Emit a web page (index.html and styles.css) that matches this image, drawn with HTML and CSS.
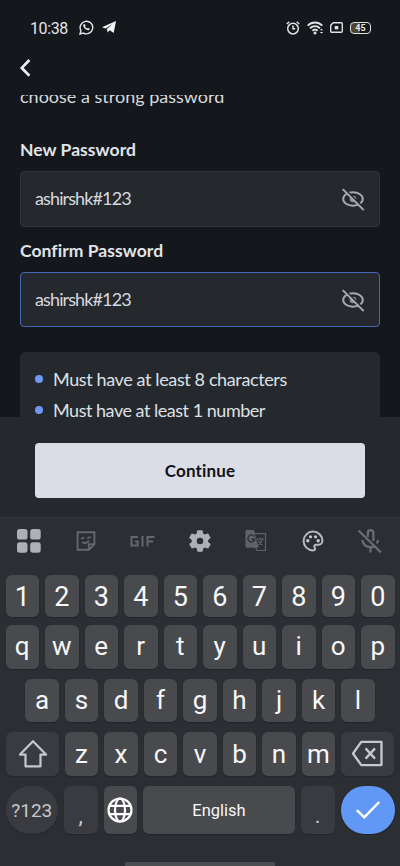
FILE: index.html
```html
<!DOCTYPE html>
<html lang="en">
<head>
<meta charset="utf-8">
<title>New password</title>
<link rel="stylesheet" href="styles.css">
</head>
<body>
<div class="screen">
  <header class="status">
    <span class="time">10:38</span>
    <svg class="whatsapp" width="15" height="15" viewBox="0 0 15 15" fill="none" stroke="#e4e6e9" stroke-width="1.4"><path d="M1 14l.9-3.4A6.3 6.3 0 1 1 4.400 13.100z"/><path d="M4.700 4.200l1-.3.900 1.700-.6.800c.5 1 1.200 1.700 2.200 2.100l.8-.7 1.700.9c-.2 1.300-1.200 1.700-2.300 1.400-2-.6-3.800-2.300-4.200-4.200-.1-.7 0-1.300.5-1.700z" fill="#e4e6e9" stroke="none"/></svg>
    <svg class="telegram" width="14" height="13" viewBox="0 0 14 13" fill="#f2f3f4"><path d="M0 6.300L14 0l-2.300 12.100-4-2.900-2.100 2.200-.7-3.500L10.500 3 3.600 7.400z"/></svg>
    <span class="spacer"></span>
    <svg class="alarm" width="14" height="14" viewBox="0 0 14 14" fill="none" stroke="#dfe1e4" stroke-width="1.500"><circle cx="7" cy="7.600" r="5.300"/><path d="M7 4.600v3.200h2.200M.8 3L3.300.8M13.200 3L10.700.8"/></svg>
    <svg class="wifi" width="17" height="14" viewBox="0 0 17 14" fill="none" stroke="#dfe1e4" stroke-width="1.900"><path d="M.7 4.600c4.200-4.200 10.400-4.200 14.600 0M3 7.300c3-2.900 7-2.900 10 0M5.400 9.800c1.600-1.500 3.600-1.500 5.200 0"/><circle cx="8" cy="12" r="1.500" fill="#dfe1e4" stroke="none"/><path d="M12.700 9.300l1.800-1.600 1.800 1.600zM12.700 10.900l1.800 1.600 1.800-1.600z" fill="#dfe1e4" stroke="none"/></svg>
    <svg class="sim" width="13" height="11" viewBox="0 0 13 11" fill="none" stroke="#dfe1e4" stroke-width="1.400"><path d="M3.300.7h8a1 1 0 0 1 1 1v7.600a1 1 0 0 1-1 1H1.700a1 1 0 0 1-1-1V3.300z"/><path d="M4.700 4h3.600v3.400H4.700z" fill="#dfe1e4" stroke="none"/></svg>
    <span class="battery">45</span>
  </header>
  <nav class="nav">
    <svg width="12" height="18" viewBox="0 0 12 18" fill="none" stroke="#eceef1" stroke-width="2.700"><path d="M10.400 1L2.800 8.900l7.600 7.900"/></svg>
  </nav>
  <main class="content">
    <p class="hint"><span>choose a strong password</span></p>
    <label class="label new">New Password</label>
    <div class="field"><span>ashirshk#123</span>
      <svg width="24" height="24" viewBox="0 0 24 24" fill="none" stroke="#a6a9b2" stroke-width="2"><ellipse cx="12" cy="12" rx="9.800" ry="6.700"/><circle cx="12" cy="12" r="3.300" fill="#8d9098" stroke="none"/><path d="M2.700 1.200l21 21" stroke="#25292e"/><path d="M1.700 2.100l21 21"/></svg>
    </div>
    <label class="label confirm">Confirm Password</label>
    <div class="field focused"><span>ashirshk#123</span>
      <svg width="24" height="24" viewBox="0 0 24 24" fill="none" stroke="#a6a9b2" stroke-width="2"><ellipse cx="12" cy="12" rx="9.800" ry="6.700"/><circle cx="12" cy="12" r="3.300" fill="#8d9098" stroke="none"/><path d="M2.700 1.200l21 21" stroke="#25292e"/><path d="M1.700 2.100l21 21"/></svg>
    </div>
    <ul class="rules">
      <li>Must have at least 8 characters</li>
      <li class="second">Must have at least 1 number</li>
    </ul>
  </main>
  <footer class="action"><button>Continue</button></footer>
  <section class="keyboard">
    <div class="tools">
      <svg width="26" height="26" viewBox="0 0 26 26" fill="#aeb0b6"><rect x="1" y="1" width="10.500" height="10.500" rx="2.600"/><rect x="14.200" y="1" width="10.500" height="10.500" rx="2.600"/><rect x="1" y="14.200" width="10.500" height="10.500" rx="2.600"/><rect x="14.200" y="14.200" width="10.500" height="10.500" rx="2.600"/></svg>
      <svg width="26" height="26" viewBox="0 0 26 26" fill="none" stroke="#65676b" stroke-width="1.900"><path d="M4.600 4.300h16.800v11.900l-5.400 5.500H4.600z"/><path d="M15.800 21.500v-5.400h5.500M8 10.600l3.200-1M14.200 10.200l3.700-1.100M9 14.200c2.700 1.300 5.300.7 7.200-1.300"/></svg>
      <svg width="28" height="26" viewBox="2 0 28 26" fill="none" stroke="#65676b" stroke-width="2"><path d="M10 9H3.500v8.500H9.700v-4H7M14.500 8v10.500M19.500 18.500V9h7M19.500 13.400h5.500"/></svg>
      <svg width="24" height="24" viewBox="1 1 22 22" fill="#aeb0b6"><path d="M19.400 13c0-.3.100-.6.100-1s0-.7-.1-1l2.100-1.600c.2-.2.200-.4.100-.6l-2-3.500c-.1-.2-.4-.3-.6-.2l-2.500 1c-.5-.4-1.100-.7-1.700-1l-.4-2.600c0-.2-.2-.4-.5-.4h-4c-.2 0-.4.200-.5.400L9 5.100c-.6.300-1.200.6-1.700 1l-2.500-1c-.2-.1-.5 0-.6.200l-2 3.500c-.1.200-.1.400.1.600L4.500 11c0 .3-.1.700-.1 1s0 .7.100 1l-2.100 1.600c-.2.200-.2.400-.1.600l2 3.500c.1.200.4.300.6.200l2.500-1c.5.400 1.100.7 1.700 1l.4 2.600c0 .2.200.4.500.4h4c.2 0 .4-.2.500-.4l.4-2.600c.6-.3 1.200-.6 1.700-1l2.500 1c.2.100.5 0 .6-.2l2-3.500c.1-.2.100-.4-.1-.6zM12 15a3 3 0 1 1 0-6 3 3 0 0 1 0 6z"/></svg>
      <svg width="26" height="26" viewBox="0 0 26 26" fill="none" stroke="#606267"><path d="M3.500 2.500h7l1.200 3.200h10.800v16.800h-8.500l-1.500-3.500h-9z" stroke-width="1.200"/><path d="M2.500 3.500a1.500 1.500 0 0 1 1.500-1.500h6.500l5.200 17.500H4A1.500 1.500 0 0 1 2.500 18z" fill="#606267" stroke="none"/><path d="M11.200 8.300a3.500 3.500 0 1 0 .6 3H8.500" stroke="#2c2f33" stroke-width="1.400"/><path d="M13 11h8M17 9.500V11M19.500 11c-.7 2.500-2.500 4.500-4.500 6M15 12.500c1 2 2.500 3.500 4.500 4.500" stroke-width="1.200"/></svg>
      <svg width="26" height="26" viewBox="0 0 26 26" fill="none" stroke="#b9bbc0" stroke-width="2"><path d="M13 3.600a9.400 9.400 0 1 0 0 18.800c2.100 0 2.700-1.400 1.700-2.800-.9-1.500-.1-2.900 1.600-2.900h2.300c2.100 0 3.800-1.700 3.800-3.900 0-5.100-4.200-9.200-9.400-9.200z"/><g fill="#c8cace" stroke="none"><circle cx="7.800" cy="12.800" r="1.700"/><circle cx="10.500" cy="8.800" r="1.600"/><circle cx="15.500" cy="8.800" r="1.600"/><circle cx="18.200" cy="12.800" r="1.700"/></g></svg>
      <svg width="26" height="26" viewBox="0 0 26 26" fill="none" stroke="#6b6d72" stroke-width="2.200"><path d="M10.800 9V5a2.800 2.800 0 0 1 5.600 0v8M5.500 12c0 4 3.400 7.200 8 7.200 1.600 0 3-.3 4.100-1M19.800 15.500c.7-1 1.100-2.200 1.100-3.500M13.500 19v5.500"/><path d="M1.500 2.500l22.500 22"/></svg>
    </div>
    <div class="row numbers"><kbd>1</kbd><kbd>2</kbd><kbd>3</kbd><kbd>4</kbd><kbd>5</kbd><kbd>6</kbd><kbd>7</kbd><kbd>8</kbd><kbd>9</kbd><kbd>0</kbd></div>
    <div class="row"><kbd>q</kbd><kbd>w</kbd><kbd>e</kbd><kbd>r</kbd><kbd>t</kbd><kbd>y</kbd><kbd>u</kbd><kbd>i</kbd><kbd>o</kbd><kbd>p</kbd></div>
    <div class="row"><kbd>a</kbd><kbd>s</kbd><kbd>d</kbd><kbd>f</kbd><kbd>g</kbd><kbd>h</kbd><kbd>j</kbd><kbd>k</kbd><kbd>l</kbd></div>
    <div class="row">
      <kbd class="dark wide"><svg width="30" height="30" viewBox="0 0 30 30" fill="none" stroke="#c5c8cd" stroke-width="2.200" stroke-linejoin="round"><path d="M15 2.200L28 15.600h-5.500v11.700h-15V15.600H2z"/></svg></kbd><kbd>z</kbd><kbd>x</kbd><kbd>c</kbd><kbd>v</kbd><kbd>b</kbd><kbd>n</kbd><kbd>m</kbd>
      <kbd class="dark wide"><svg width="33" height="27" viewBox="0 0 34 28" fill="none" stroke="#c5c8cd" stroke-width="2.400" stroke-linejoin="round"><path d="M10.500 2H31.500v24H10.500L2 14z"/><path d="M15 8.700l9.800 10.600M24.800 8.700l-9.800 10.600"/></svg></kbd>
    </div>
    <div class="row bottom">
      <kbd class="dark wide symbols">?123</kbd>
      <kbd class="dark punct">,</kbd>
      <kbd><svg width="28" height="28" viewBox="0 0 28 28" fill="none" stroke="#fff" stroke-width="2.200"><circle cx="14" cy="14" r="11.500"/><ellipse cx="14" cy="14" rx="5" ry="11.500"/><path d="M3.500 9.800h21M3.500 18.200h21"/></svg></kbd>
      <kbd class="space">English</kbd>
      <kbd class="dark punct">.</kbd>
      <kbd class="wide enter"><svg width="28" height="22" viewBox="0 0 28 22" fill="none" stroke="#fff" stroke-width="2.500"><path d="M2.800 11.200l7.500 7.100L25.200 3"/></svg></kbd>
    </div>
    <div class="home"></div>
  </section>
</div>
</body>
</html>
```

FILE: styles.css
```css
* { box-sizing: border-box; }
body { margin: 0; background: #14171b; font-family: Lato, "Liberation Sans", sans-serif; color: #e1e4e9; }
.screen { width: 400px; height: 866px; display: flex; flex-direction: column; overflow: hidden; background: #14171b; }
svg { display: block; flex: none; }
.status { height: 55px; flex: none; display: flex; align-items: center; padding: 0 29px 0 30px; }
.time { width: 49px; font: 16px/20px Roboto, sans-serif; letter-spacing: -.4px; padding-top: 2px; color: #e4e6e9; }
.telegram { margin-left: 8px; }
.spacer { flex: 1; }
.wifi { margin-left: 7px; }
.sim { margin-left: 6px; }
.battery { margin-left: 7px; width: 21px; height: 12px; border: 1.5px solid #dfe1e4; border-radius: 4px; background: linear-gradient(90deg, #51452f 45%, #14171b 45%); font: bold 9px/11px Roboto, sans-serif; text-align: center; color: #e4e6e9; }
.nav { height: 40px; flex: none; padding: 4px 0 0 19px; }
.content { height: 322px; flex: none; overflow: hidden; padding: 0 20px; display: flex; flex-direction: column; }
.hint { margin: 0; height: 45px; overflow: hidden; flex: none; }
.hint span { display: block; margin-top: -10px; font-size: 18px; line-height: 22px; color: #d7dade; white-space: nowrap; }
.label { display: block; flex: none; font-size: 17.500px; font-weight: 700; line-height: 20px; letter-spacing: .05px; }
.new { height: 31px; }
.confirm { height: 31px; margin-top: 14px; }
.field { flex: none; height: 56px; border: 1px solid #303439; border-radius: 4px; background: #25292e; display: flex; align-items: center; justify-content: space-between; padding: 0 14px; font-size: 18px; letter-spacing: -.88px; color: #d6d9df; }
.field span { padding-bottom: 2px; }
.field.focused { height: 55px; border: 1.5px solid #4668b4; }
.rules { flex: none; list-style: none; margin: 25px 0 0; padding: 17px 15px; height: 110px; border-radius: 6px; background: #25292e; font-size: 18px; letter-spacing: -.38px; line-height: 20px; }
.rules li { display: flex; align-items: center; height: 20px; color: #dde0e5; }
.rules li::before { content: ""; width: 8px; height: 8px; border-radius: 50%; background: #7197f5; margin-right: 10px; }
.rules .second { margin-top: 11px; letter-spacing: -.48px; }
.action { flex: none; height: 100px; padding: 26px 35px 0; background: #25292e; }
.action button { display: block; width: 330px; height: 55px; border: 0; border-radius: 4px; background: #dadde6; color: #111318; font: 700 17px/54px Lato, sans-serif; letter-spacing: .15px; padding: 0; }
.keyboard { flex: none; height: 349px; background: #2b2e33; border-top: 1px solid #34373c; padding: 0 5px; display: flex; flex-direction: column; font-family: Roboto, sans-serif; }
.tools { height: 47px; display: flex; justify-content: space-between; align-items: center; padding: 0 12px 0 11px; }
.row { display: flex; justify-content: center; gap: 6px; margin-top: 10px; height: 44px; }
.row.numbers { height: 42px; margin-top: 10px; margin-bottom: -2px; }
kbd { width: 33.500px; flex: none; border-radius: 6px; background: #484a4e; color: #f7f7f8; font: 26px/1 Roboto, sans-serif; display: flex; align-items: center; justify-content: center; box-shadow: 0 1px 1px #222529; }
.row.numbers kbd { font-size: 27px; padding-top: 4px; }
.row:not(.numbers) kbd { padding-bottom: 1px; }
.dark { background: #393b40; }
.wide { width: 52.500px; }
.row.bottom { height: 48px; }
.row.bottom .symbols { border-radius: 24px; font-size: 19px; padding: 0; color: #c5c8cd; }
.row.bottom .punct { font-size: 22px; padding-top: 12px; color: #c5c8cd; }
.row.bottom .space { width: 152px; font-size: 16.500px; padding: 3px 0 0; }
.row.bottom .enter { width: 54px; border-radius: 25px; background: #6298f5; }
.home { width: 150px; height: 4px; margin: 28px auto 0; background: #4b4d51; }
```
